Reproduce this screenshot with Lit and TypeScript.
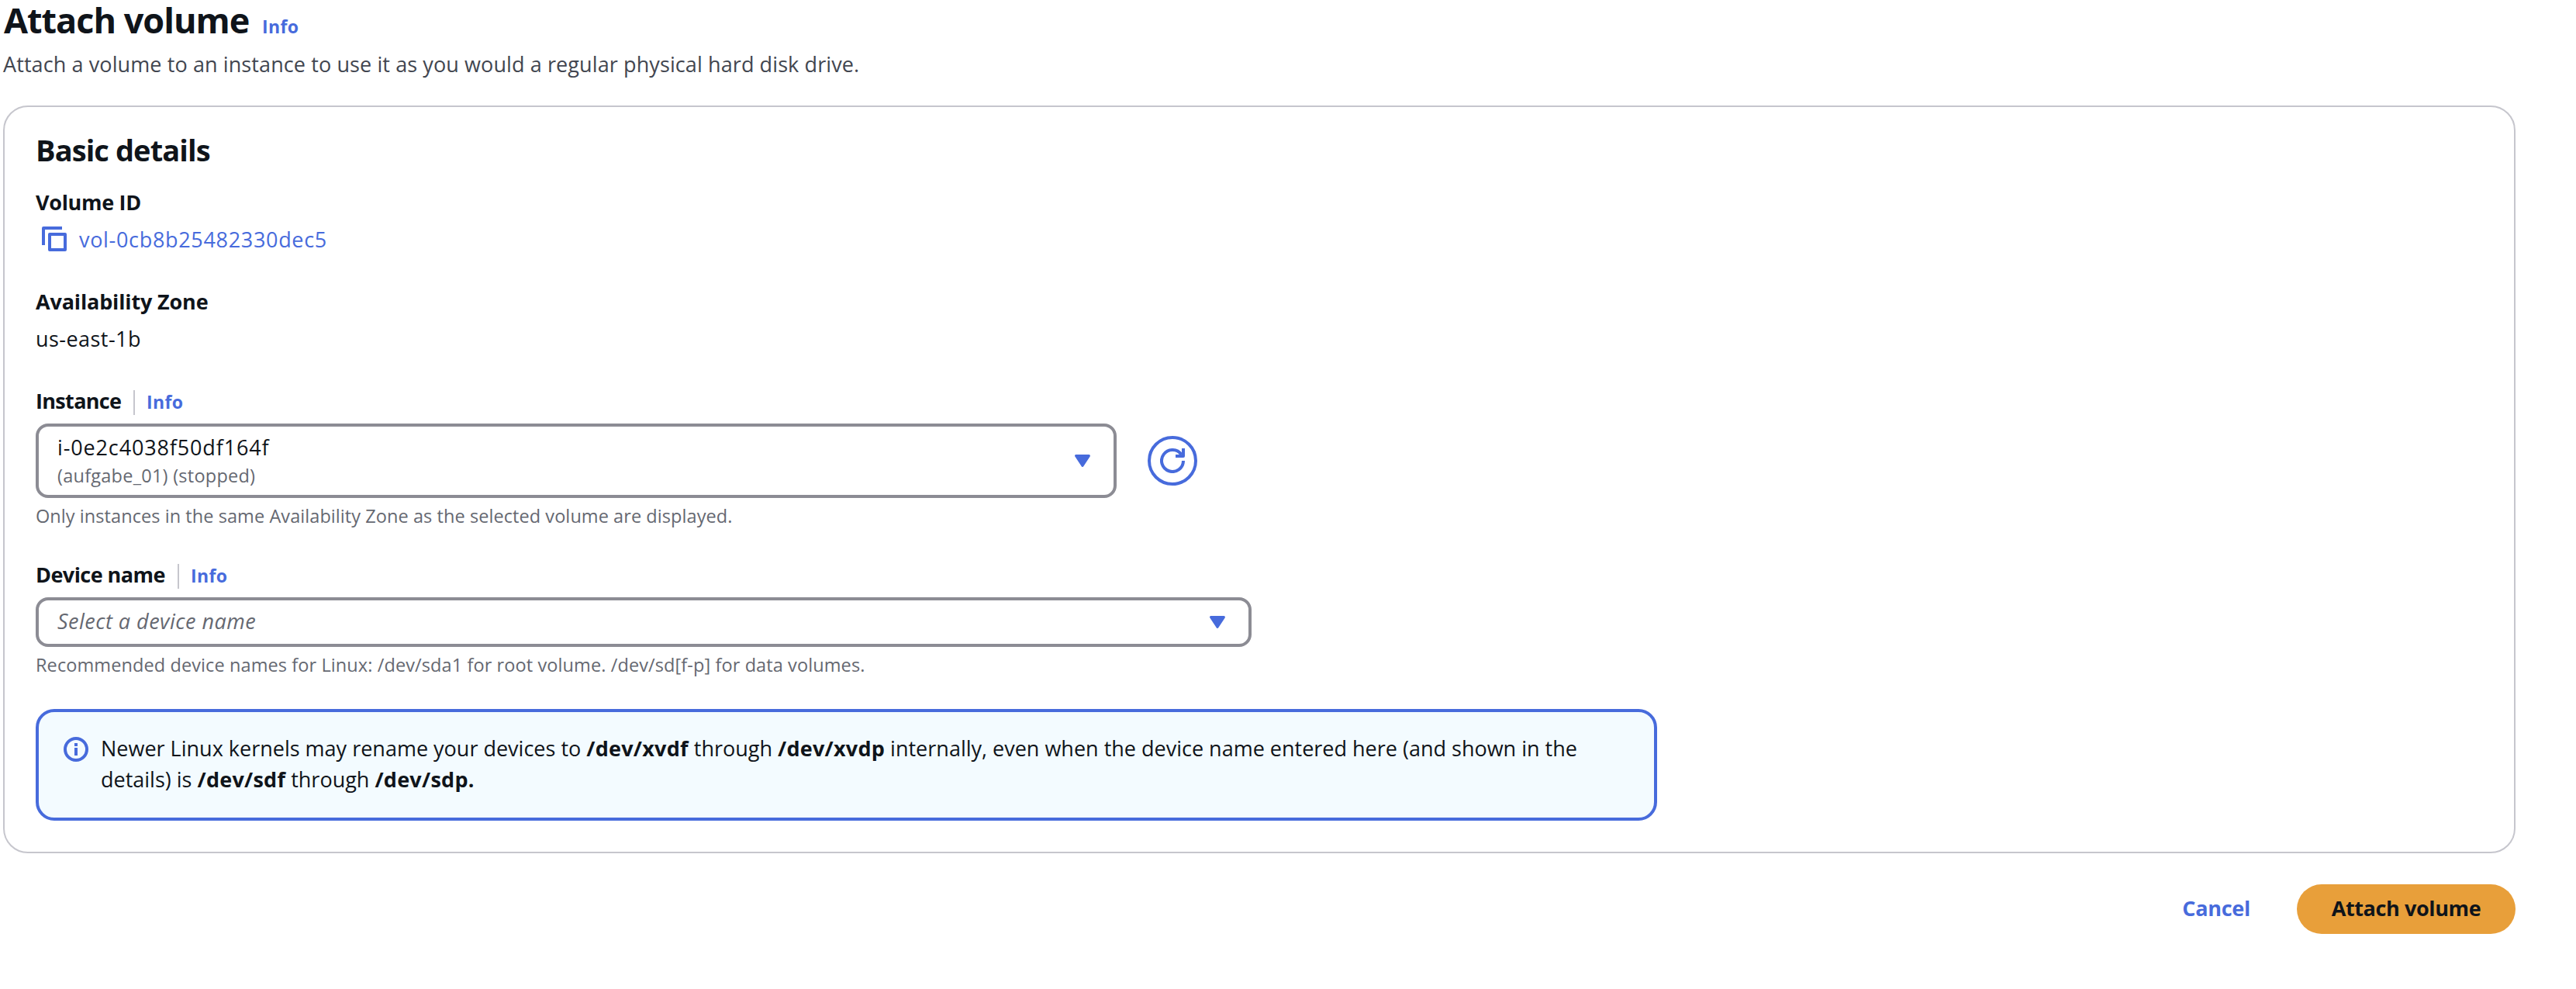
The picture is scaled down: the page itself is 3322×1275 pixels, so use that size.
import { LitElement, html, css, svg } from "lit";

const caret = svg`<path d="M1.6 1.6h16.8L10 14.4Z" fill="currentColor" stroke="currentColor" stroke-width="3" stroke-linejoin="round"/>`;

class AppRoot extends LitElement {
  static styles = css`
    :host { display: block; font-family: "Open Sans", "Noto Sans", sans-serif; color: #0f141a; background: #fff; font-size: 27px; line-height: 40px; }
    * { box-sizing: border-box; }
    svg { display: block; flex: none; }
    h1, h2, p { margin: 0; white-space: nowrap; }
    .page { width: 3244px; padding-left: 4px; }
    .title { display: flex; align-items: baseline; height: 50px; padding-top: 1px; }
    h1 { width: 334px; font-size: 45px; line-height: 49px; letter-spacing: -1px; padding-left: 1px; }
    .info { font-size: 23px; font-weight: 700; color: #476bdc; line-height: 32px; letter-spacing: .4px; }
    .desc { margin-top: 12px; height: 40px; line-height: 42px; color: #424650; letter-spacing: .1px; }
    .card { margin-top: 34px; border: 2px solid #c6c6cd; border-radius: 32px; height: 964px; padding: 30px 40px 0; }
    h2 { font-size: 38px; line-height: 46px; padding-top: 2px; letter-spacing: -.9px; }
    .pair { margin-top: 24px; }
    .pair + .pair { margin-top: 40px; }
    .label { font-weight: 700; letter-spacing: -.15px; height: 40px; line-height: 42px; }
    .vid { letter-spacing: -.31px; }
    .inst { width: 110px; letter-spacing: -.67px; }
    .dev { width: 167px; letter-spacing: -.55px; }
    .value { display: flex; align-items: center; margin-top: 8px; height: 40px; line-height: 42px; letter-spacing: .45px; }
    .link { color: #476bdc; margin-left: 16px; letter-spacing: .68px; }
    .copy { margin-left: 8px; }
    .az { padding-top: 2px; }
    .vol { padding-top: 2px; }
    .field { margin-top: 40px; }
    .field + .field { margin-top: 39px; }
    .head { display: flex; align-items: baseline; height: 40px; margin-bottom: 10px; white-space: nowrap; }
    .rule { width: 2px; height: 32px; background: #c6c6cd; align-self: center; margin: 6px 15px 0 16px; }
    .line { display: flex; align-items: center; gap: 40px; }
    .select { border: 4px solid #8c8c94; border-radius: 16px; display: flex; align-items: center; justify-content: space-between; padding: 0 30px 0 24px; color: #476bdc; }
    .tall { width: 1394px; height: 96px; }
    .wide { width: 1568px; height: 64px; }
    .option { align-self: flex-start; margin-top: 7px; }
    .ident { letter-spacing: .86px; color: #0f141a; }
    .sub { font-size: 23.5px; line-height: 32px; color: #656871; letter-spacing: .25px; }
    .placeholder { font-style: italic; color: #656871; padding-bottom: 2px; letter-spacing: .48px; }
    .round { width: 64px; height: 64px; border: 4px solid #476bdc; border-radius: 50%; display: grid; place-items: center; }
    .hint { font-size: 23.5px; line-height: 32px; color: #656871; margin-top: 7px; letter-spacing: .07px; }
    .rec { letter-spacing: .1px; }
    .alert { margin-top: 41px; width: 2091px; height: 144px; border: 4px solid #476bdc; border-radius: 24px; background: #f3fbff; display: flex; padding: 26px 0 0 32px; }
    .alert svg { margin: 6px 15px 0 0; }
    .alert p { padding: 1px 0 0 1px; letter-spacing: 0; }
    .alert b { letter-spacing: .25px; }
    .actions { display: flex; justify-content: flex-end; align-items: center; margin-top: 40px; height: 64px; font-weight: 700; }
    .cancel { color: #476bdc; letter-spacing: -.26px; margin-right: 60px; padding-bottom: 2px; }
    .primary { width: 282px; height: 64px; border-radius: 32px; background: #e89f3a; display: grid; place-items: center; letter-spacing: -.38px; padding-bottom: 2px; }
  `;

  render() {
    return html`
      <div class="page">
        <div class="title"><h1>Attach volume</h1><a class="info">Info</a></div>
        <p class="desc">Attach a volume to an instance to use it as you would a regular physical hard disk drive.</p>
        <section class="card">
          <h2>Basic details</h2>
          <div class="pair">
            <div class="label vid">Volume ID</div>
            <div class="value">
              <svg class="copy" width="32" height="32" fill="none" stroke="#476bdc" stroke-width="4" stroke-linejoin="round"><path d="M2 24V2H26"/><path d="M10 10H30V30H10Z"/></svg>
              <a class="link vol">vol-0cb8b25482330dec5</a>
            </div>
          </div>
          <div class="pair">
            <div class="label">Availability Zone</div>
            <div class="value"><span class="az">us-east-1b</span></div>
          </div>
          <div class="field">
            <div class="head"><span class="label inst">Instance</span><i class="rule"></i><a class="info">Info</a></div>
            <div class="line">
              <div class="select tall">
                <div class="option"><div class="ident">i-0e2c4038f50df164f</div><div class="sub">(aufgabe_01) (stopped)</div></div>
                <svg width="20" height="16">${caret}</svg>
              </div>
              <div class="round">
                <svg width="32" height="32" fill="none" stroke="#476bdc" stroke-width="4"><path d="M30 16A14 14 0 1 1 27.5 8"/><path d="M20 10H30V0" stroke-linejoin="round"/></svg>
              </div>
            </div>
            <div class="hint">Only instances in the same Availability Zone as the selected volume are displayed.</div>
          </div>
          <div class="field">
            <div class="head"><span class="label dev">Device name</span><i class="rule"></i><a class="info">Info</a></div>
            <div class="select wide">
              <span class="placeholder">Select a device name</span>
              <svg width="20" height="16">${caret}</svg>
            </div>
            <div class="hint rec">Recommended device names for Linux: /dev/sda1 for root volume. /dev/sd[f-p] for data volumes.</div>
          </div>
          <div class="alert">
            <svg width="32" height="32" fill="none" stroke="#476bdc" stroke-width="4"><circle cx="16" cy="16" r="14"/><path d="M16 14V24M16 8V12"/></svg>
            <p>Newer Linux kernels may rename your devices to <b>/dev/xvdf</b> through <b>/dev/xvdp</b> internally, even when the device name entered here (and shown in the<br>details) is <b>/dev/sdf</b> through <b>/dev/sdp.</b></p>
          </div>
        </section>
        <div class="actions"><a class="cancel">Cancel</a><div class="primary">Attach volume</div></div>
      </div>`;
  }
}
customElements.define("app-root", AppRoot);
